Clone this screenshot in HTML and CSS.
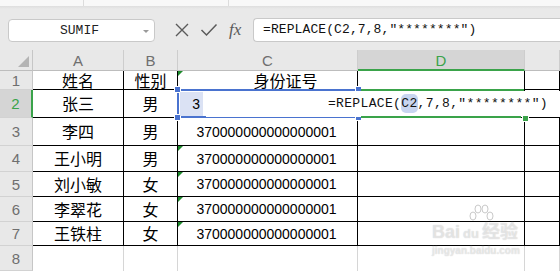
FILE: index.html
```html
<!DOCTYPE html>
<html lang="zh-CN">
<head>
    <meta charset="UTF-8">
    <title>WPS 表格 - REPLACE</title>
    <link rel="stylesheet" href="styles.css">
</head>
<body>
    <div class="tabstrip">
        <span class="tab-sep s1"></span>
        <span class="tab-sep s2"></span>
    </div>
    <div class="gap-top"></div>

    <div class="formula-row">
        <div class="name-box">
            <span class="name-text">SUMIF</span>
            <span class="name-arrow"></span>
        </div>
        <div class="formula-icons">
            <svg width="16" height="16" viewBox="0 0 16 16" class="ico">
                <path d="M2 2 L14 14 M14 2 L2 14" stroke="#5a5a5a" stroke-width="1.4" fill="none"/>
            </svg>
            <svg width="18" height="16" viewBox="0 0 18 16" class="ico">
                <path d="M1.5 8 L6.5 13 L16.5 2.5" stroke="#5a5a5a" stroke-width="1.5" fill="none"/>
            </svg>
            <span class="fx">fx</span>
        </div>
        <div class="formula-input">=REPLACE(C2,7,8,"********")</div>
    </div>
    <div class="gap-bottom"></div>

    <div class="sheet">
        <!-- column headers -->
        <div class="corner"><span class="corner-tri"></span></div>
        <div class="col-hdr">A</div>
        <div class="col-hdr">B</div>
        <div class="col-hdr">C</div>
        <div class="col-hdr sel">D</div>
        <div class="col-hdr"></div>

        <div class="row-hdr">1</div>
        <div class="cell cn">姓名</div>
        <div class="cell cn">性别</div>
        <div class="cell cn title-c"><span class="err"></span>身份证号</div>
        <div class="cell"></div>
        <div class="cell"></div>

        <div class="row-hdr sel">2</div>
        <div class="cell cn">张三</div>
        <div class="cell cn">男</div>
        <div class="cell"></div>
        <div class="cell"></div>
        <div class="cell"></div>

        <div class="row-hdr">3</div>
        <div class="cell cn">李四</div>
        <div class="cell cn">男</div>
        <div class="cell num">370000000000000001</div>
        <div class="cell"></div>
        <div class="cell"></div>

        <div class="row-hdr">4</div>
        <div class="cell cn">王小明</div>
        <div class="cell cn">男</div>
        <div class="cell num"><span class="err"></span>370000000000000001</div>
        <div class="cell"></div>
        <div class="cell"></div>

        <div class="row-hdr">5</div>
        <div class="cell cn">刘小敏</div>
        <div class="cell cn">女</div>
        <div class="cell num"><span class="err"></span>370000000000000001</div>
        <div class="cell"></div>
        <div class="cell"></div>

        <div class="row-hdr">6</div>
        <div class="cell cn">李翠花</div>
        <div class="cell cn">女</div>
        <div class="cell num"><span class="err"></span>370000000000000001</div>
        <div class="cell"></div>
        <div class="cell"></div>

        <div class="row-hdr">7</div>
        <div class="cell cn">王铁柱</div>
        <div class="cell cn">女</div>
        <div class="cell num"><span class="err"></span>370000000000000001</div>
        <div class="cell"></div>
        <div class="cell"></div>

        <div class="row-hdr">8</div>
        <div class="cell empty"></div>
        <div class="cell empty"></div>
        <div class="cell empty"></div>
        <div class="cell empty"></div>
        <div class="cell empty"></div>

        <!-- editing overlays -->
        <div class="ref-box">
            <span class="handle h-tl"></span>
            <span class="handle h-tr"></span>
            <span class="handle h-bl"></span>
            <span class="handle h-br"></span>
        </div>
        <div class="ref-value">3</div>
        <div class="editor">=REPLACE(<span class="ref-hl">C2</span>,7,8,"********")</div>
        <div class="edit-line top"></div>
        <div class="edit-line bottom"></div>
        <div class="edit-handle"></div>

        <div class="watermark">
            <svg class="wm-paw" width="30" height="18" viewBox="0 0 30 18">
                <ellipse cx="8" cy="12" rx="3" ry="4" fill="none" stroke="#c9c9c9"/>
                <ellipse cx="13" cy="5" rx="3" ry="4" fill="none" stroke="#c9c9c9"/>
                <ellipse cx="20" cy="5" rx="3" ry="4" fill="none" stroke="#c9c9c9"/>
                <ellipse cx="25" cy="12" rx="3" ry="4" fill="none" stroke="#c9c9c9"/>
            </svg>
            <div class="wm-logo">Bai<span class="wm-du">du</span>经验</div>
            <div class="wm-url">jingyan.baidu.com</div>
        </div>
    </div>
</body>
</html>
```

FILE: styles.css
```css
body {
    margin: 0;
    width: 560px;
    height: 271px;
    overflow: hidden;
    background-color: #e9e9e9;
    font-family: 'Liberation Sans', Arial, sans-serif;
}

.tabstrip {
    height: 6px;
    background-color: #f8f8f8;
    position: relative;
}

.tab-sep {
    position: absolute;
    top: 0;
    width: 1px;
    height: 6px;
    background-color: #dcdcdc;
}

.s1 { left: 83px; }
.s2 { left: 228px; }

.gap-top {
    height: 12px;
    background: linear-gradient(#dedede, #e9e9e9 3px);
}

.formula-row {
    height: 24px;
    display: flex;
    align-items: center;
}

.name-box {
    margin-left: 8px;
    width: 145px;
    height: 21px;
    background-color: #fff;
    border: 1px solid #c9c9c9;
    border-radius: 4px;
    display: flex;
    align-items: center;
    position: relative;
}

.name-text {
    flex: 1;
    text-align: center;
    font-family: 'Liberation Mono', monospace;
    font-size: 13px;
    color: #222;
    padding-right: 4px;
}

.name-arrow {
    position: absolute;
    right: 5px;
    top: 10px;
    border-left: 3px solid transparent;
    border-right: 3px solid transparent;
    border-top: 3px solid #9a9a9a;
}

.formula-icons {
    width: 98px;
    display: flex;
    align-items: center;
    padding-left: 19px;
    gap: 10px;
    box-sizing: border-box;
}

.fx {
    font-family: 'Liberation Serif', serif;
    font-style: italic;
    font-size: 17px;
    color: #5a5a5a;
    margin-left: 1px;
}

.formula-input {
    flex: 1;
    height: 22px;
    background-color: #fff;
    border: 1px solid #c9c9c9;
    border-right: none;
    border-radius: 4px 0 0 4px;
    font-family: 'Liberation Mono', monospace;
    font-size: 13px;
    line-height: 22px;
    letter-spacing: 0.1px;
    padding-left: 9px;
    color: #111;
}

.gap-bottom {
    height: 8px;
}

.sheet {
    position: relative;
    display: grid;
    grid-template-columns: 33px 91px 54px 180px 167px 1fr;
    grid-template-rows: 21px 19px 28px 28px 26px 25px 25px 24px 25px;
    background-color: #fff;
}

.corner {
    background-color: #e8e8e8;
    border-right: 1px solid #c6c6c6;
    border-bottom: 1px solid #bdbdbd;
    position: relative;
}

.corner-tri {
    position: absolute;
    right: 3px;
    bottom: 3px;
    border-left: 11px solid transparent;
    border-bottom: 11px solid #b4b4b4;
}

.col-hdr {
    background-color: #e8e8e8;
    border-right: 1px solid #cdcdcd;
    border-bottom: 1px solid #bdbdbd;
    color: #6f6f6f;
    font-size: 15px;
    text-align: center;
    line-height: 21px;
}

.col-hdr.sel {
    background-color: #d5d5d5;
    color: #3aa34a;
    border-bottom: 2px solid #3aa34a;
}

.row-hdr {
    background-color: #e8e8e8;
    border-right: 1px solid #c6c6c6;
    border-bottom: 1px solid #d2d2d2;
    color: #6f6f6f;
    font-size: 15px;
    display: flex;
    align-items: center;
    justify-content: center;
}

.row-hdr.sel {
    background-color: #d5d5d5;
    color: #3aa34a;
    border-right: 2px solid #3aa34a;
}

.cell {
    border-right: 1px solid #000;
    border-bottom: 1px solid #000;
    display: flex;
    align-items: center;
    justify-content: center;
    position: relative;
    color: #000;
    min-height: 0;
}

.cell.empty {
    border-right: 1px solid #d6d6d6;
    border-bottom: none;
}

.cn {
    font-family: 'Noto Sans CJK SC', sans-serif;
    font-size: 16px;
    line-height: 17px;
}

.title-c {
    padding-left: 36px;
}

.num {
    font-family: 'Liberation Sans', Arial, sans-serif;
    font-size: 14px;
    padding-right: 2px;
}

.err {
    position: absolute;
    left: 0;
    top: 0;
    border-top: 5px solid #1d8a2c;
    border-right: 5px solid transparent;
}

.ref-box {
    position: absolute;
    left: 177px;
    top: 39px;
    width: 182px;
    height: 29px;
    border: 2px solid #4a73cf;
    box-sizing: border-box;
}

.handle {
    position: absolute;
    width: 5px;
    height: 5px;
    background-color: #4a73cf;
    border: 1px solid #fff;
}

.h-tl { left: -5px; top: -5px; }
.h-tr { right: -5px; top: -5px; }
.h-bl { left: -5px; bottom: -5px; }
.h-br { right: -5px; bottom: -5px; }

.ref-value {
    position: absolute;
    left: 180px;
    top: 42px;
    width: 23px;
    height: 24px;
    background-color: #dbe2f4;
    font-size: 14px;
    line-height: 24px;
    text-align: right;
    padding-right: 3px;
    box-sizing: border-box;
}

.editor {
    position: absolute;
    left: 206px;
    right: 0;
    top: 41px;
    height: 26px;
    background-color: #fff;
    font-family: 'Liberation Mono', monospace;
    font-size: 13px;
    letter-spacing: 0.35px;
    line-height: 26px;
    text-align: right;
    padding-right: 12px;
    color: #111;
}

.ref-hl {
    background-color: #c8d5f0;
    border-radius: 5px;
    padding: 2px 0;
}

.edit-line {
    position: absolute;
    left: 361px;
    width: 163px;
    height: 2px;
    background-color: #3aa34a;
}

.edit-line.top { top: 39px; }
.edit-line.bottom { top: 66px; width: 160px; }

.edit-handle {
    position: absolute;
    left: 522px;
    top: 65px;
    width: 5px;
    height: 5px;
    background-color: #3aa34a;
    border: 1px solid #fff;
}

.watermark {
    position: absolute;
    left: 432px;
    top: 154px;
    color: rgba(255, 255, 255, 0.5);
    text-shadow: 0 0 1px #c4c4c4;
    pointer-events: none;
}

.wm-paw {
    display: block;
    margin-left: 33px;
}

.wm-logo {
    font-family: 'Liberation Sans', 'Noto Sans CJK SC', sans-serif;
    font-size: 18px;
    font-weight: bold;
    line-height: 20px;
}

.wm-du {
    font-size: 13px;
    margin: 0 3px;
}

.wm-url {
    font-family: 'Liberation Sans', sans-serif;
    font-size: 10px;
    font-weight: bold;
    line-height: 14px;
}
```
